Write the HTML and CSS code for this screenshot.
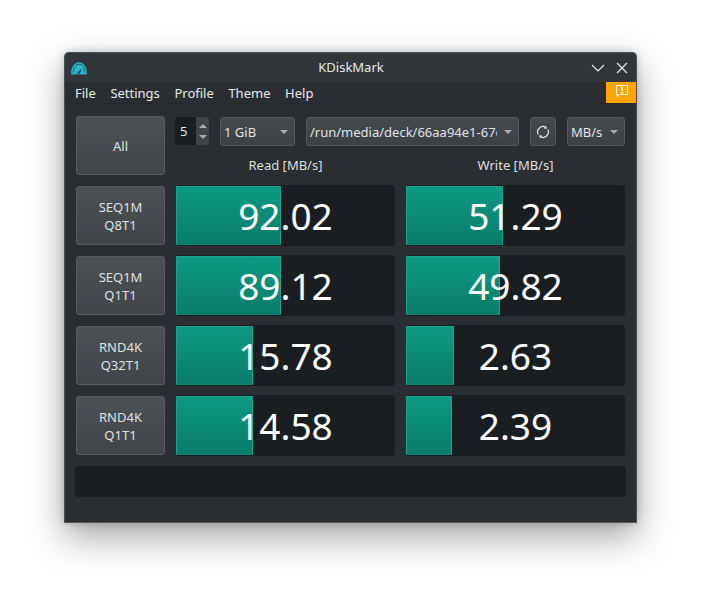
FILE: index.html
```html
<!DOCTYPE html>
<html lang="en">
<head>
<meta charset="utf-8">
<title>KDiskMark</title>
<link rel="stylesheet" href="styles.css">
</head>
<body>
<div class="window">
  <header class="titlebar">
    <svg class="app-icon" viewBox="0 0 16 13" width="16" height="13"><path d="M.3 12.6 C-.6 5.5 3.5 .3 8 .3 C12.500 .3 16.600 5.500 15.700 12.600 Z" fill="#2bb5c4"/><path d="M2.200 10.500 C2.200 5 5 2.200 8 2.200 C11 2.200 13.800 5 13.800 10.500" fill="none" stroke="#1b5f6c" stroke-width="1"/><path d="M5.500 11.800 L11 6.500 L8.500 11.800 Z" fill="#1d3b44"/></svg>
    <span class="title">KDiskMark</span>
    <svg class="win-btn" viewBox="0 0 14 14" width="14" height="14"><path d="M1 4 L7 10 L13 4" fill="none" stroke="#e4e6e7" stroke-width="1.2"/></svg>
    <svg class="win-btn close" viewBox="0 0 14 14" width="14" height="14"><path d="M2 2 L12 12 M12 2 L2 12" fill="none" stroke="#e4e6e7" stroke-width="1.2"/></svg>
  </header>
  <nav class="menubar">
    <span class="menu-item">File</span><span class="menu-item">Settings</span><span class="menu-item">Profile</span><span class="menu-item">Theme</span><span class="menu-item">Help</span>
    <span class="alert"><svg viewBox="0 0 12 13" width="12" height="13"><path d="M.5.5 H11.5 V9.5 H3 L1.5 11.5 V9.5 H.5 Z" fill="none" stroke="#fff"/><path d="M5.200 2 H6.800 V6 H5.200 Z M5.200 7 H6.800 V8.500 H5.200 Z" fill="#fff"/></svg></span>
  </nav>
  <main class="content">
    <div class="grid">
      <button class="btn all">All</button>
      <div class="head">
        <div class="controls">
          <div class="spin">
            <span class="spin-value">5</span>
            <span class="spin-arrows"><i class="up"></i><i class="down"></i></span>
          </div>
          <div class="combo size"><span class="combo-text">1 GiB</span><i class="caret"></i></div>
          <div class="combo path"><span class="combo-text">/run/media/deck/66aa94e1-67c6</span><i class="caret"></i></div>
          <div class="combo refresh">
            <svg viewBox="0 0 14 14" width="14" height="14"><path d="M2.200 9.500 A5.500 5.500 0 0 1 10 2.400 M11.800 4.500 A5.500 5.500 0 0 1 4 11.600" fill="none" stroke="#e4e6e7" stroke-width="1.200"/><path d="M9 .8 L11.300 3.200 L8.300 3.900 Z M5 13.200 L2.700 10.800 L5.700 10.100 Z" fill="#e4e6e7"/></svg>
          </div>
          <div class="combo unit"><span class="combo-text">MB/s</span><i class="caret"></i></div>
        </div>
        <div class="labels"><span>Read [MB/s]</span><span>Write [MB/s]</span></div>
      </div>

      <button class="btn test">SEQ1M<br>Q8T1</button>
      <div class="cell"><div class="bar" style="width:105px"></div><span class="value">92.02</span></div>
      <div class="cell"><div class="bar" style="width:97px"></div><span class="value">51.29</span></div>

      <button class="btn test">SEQ1M<br>Q1T1</button>
      <div class="cell"><div class="bar" style="width:105px"></div><span class="value">89.12</span></div>
      <div class="cell"><div class="bar" style="width:94px"></div><span class="value">49.82</span></div>

      <button class="btn test">RND4K<br>Q32T1</button>
      <div class="cell"><div class="bar" style="width:77px"></div><span class="value">15.78</span></div>
      <div class="cell"><div class="bar" style="width:48px"></div><span class="value">2.63</span></div>

      <button class="btn test">RND4K<br>Q1T1</button>
      <div class="cell"><div class="bar" style="width:77px"></div><span class="value">14.58</span></div>
      <div class="cell"><div class="bar" style="width:46px"></div><span class="value">2.39</span></div>
    </div>
    <div class="progress"></div>
  </main>
</div>
</body>
</html>
```
FILE: styles.css
```css
* { box-sizing: border-box; }
html, body { margin: 0; height: 100%; background: #fff; overflow: hidden; }
body { padding: 52px 0 0 64px; font-family: "Noto Sans", sans-serif; font-size: 13px; color: #e6e8e9; }

.window {
  width: 573px;
  height: 471px;
  background: #2a2e32;
  border: 1px solid #4b5054;
  border-bottom-color: #555a5e;
  border-radius: 5px 5px 0 0;
  box-shadow: 0 14px 36px rgba(0, 0, 0, .36), 0 0 8px rgba(0, 0, 0, .2);
  display: flex;
  flex-direction: column;
}

.titlebar {
  height: 29px;
  flex: none;
  background: #31363b;
  border-radius: 4px 4px 0 0;
  display: flex;
  align-items: center;
  padding: 0 7px 0 6px;
}
.app-icon { flex: none; margin-top: 2px; }
.title { flex: 1; text-align: center; padding-left: 24px; color: #e8eaeb; line-height: 1; }
.win-btn { flex: none; }
.win-btn.close { margin-left: 10px; }

.menubar {
  height: 22px;
  flex: none;
  background: #2a2e32;
  border-bottom: 1px solid #25282c;
  display: flex;
  align-items: stretch;
  padding-left: 2.700px;
}
.menu-item { padding: 0 7.300px; line-height: 22px; }
.alert {
  margin-left: auto;
  width: 30px;
  height: 21px;
  background: #ffa500;
  display: flex;
  align-items: flex-start;
  justify-content: center;
  padding-top: 3px;
  padding-left: 1px;
}

.content { padding: 12px 11px 0; flex: 1; }

.grid {
  display: grid;
  grid-template-columns: 89px 219px 219px;
  grid-template-rows: 60px repeat(4, 61px);
  column-gap: 11px;
  row-gap: 9px;
}

.btn {
  font: inherit;
  color: #dfe1e2;
  line-height: 18px;
  padding: 0;
  border: 1px solid #585c60;
  border-radius: 3px;
  background: linear-gradient(#4d5155, #414549);
}
.btn.all { margin-bottom: 1px; }
.btn.test { margin: 1px 0; }

.head { grid-column: 2 / 4; display: flex; flex-direction: column; min-width: 0; }
.controls { display: flex; gap: 11px; height: 29px; margin: 1px 0 0 -1px; }
.spin { width: 34px; display: flex; height: 28px; border-radius: 3px; overflow: hidden; }
.spin-value { width: 21px; background: #1b1e20; padding-left: 5px; line-height: 28px; }
.spin-arrows { flex: 1; background: #404448; display: flex; flex-direction: column; align-items: center; justify-content: center; gap: 7px; }
.up { border: 4px solid transparent; border-top: 0; border-bottom: 4px solid #a9acae; }
.down { border: 4px solid transparent; border-bottom: 0; border-top: 4px solid #a9acae; }
.up, .down { width: 0; height: 0; display: block; }

.combo {
  height: 29px;
  flex: none;
  display: flex;
  align-items: center;
  justify-content: space-between;
  padding: 0 6px 0 3px;
  border: 1px solid #54585c;
  border-radius: 3px;
  background: linear-gradient(#46494d, #3d4145);
  color: #e0e2e3;
  white-space: nowrap;
}
.combo-text { flex: none; }
.caret { flex: none; width: 0; height: 0; border: 4px solid transparent; border-bottom: 0; border-top: 4px solid #a9acae; }
.size { width: 75px; }
.path { width: 213px; }
.path .combo-text { width: 187px; overflow: hidden; }
.refresh { width: 26px; padding: 0; justify-content: center; }
.unit { width: 58px; }

.labels { display: grid; grid-template-columns: 219px 219px; column-gap: 11px; margin-top: 10px; line-height: 18px; text-align: center; color: #dcdedf; }

.cell { display: grid; grid-template-rows: minmax(0, 1fr); background: #1b1e20; border-radius: 3px; padding: 1px 0; min-width: 0; overflow: hidden; }
.bar, .value { grid-area: 1 / 1; }
.bar { border: 1px solid #17a58d; border-bottom-color: #0d8371; background: linear-gradient(#0c9a82, #0a7c6a); justify-self: start; }
.value { font-size: 37px; line-height: 60px; text-align: center; color: #fff; position: relative; }

.progress { height: 31px; margin: 10px -1px 0; background: #1b1e20; border-radius: 3px; }
```
